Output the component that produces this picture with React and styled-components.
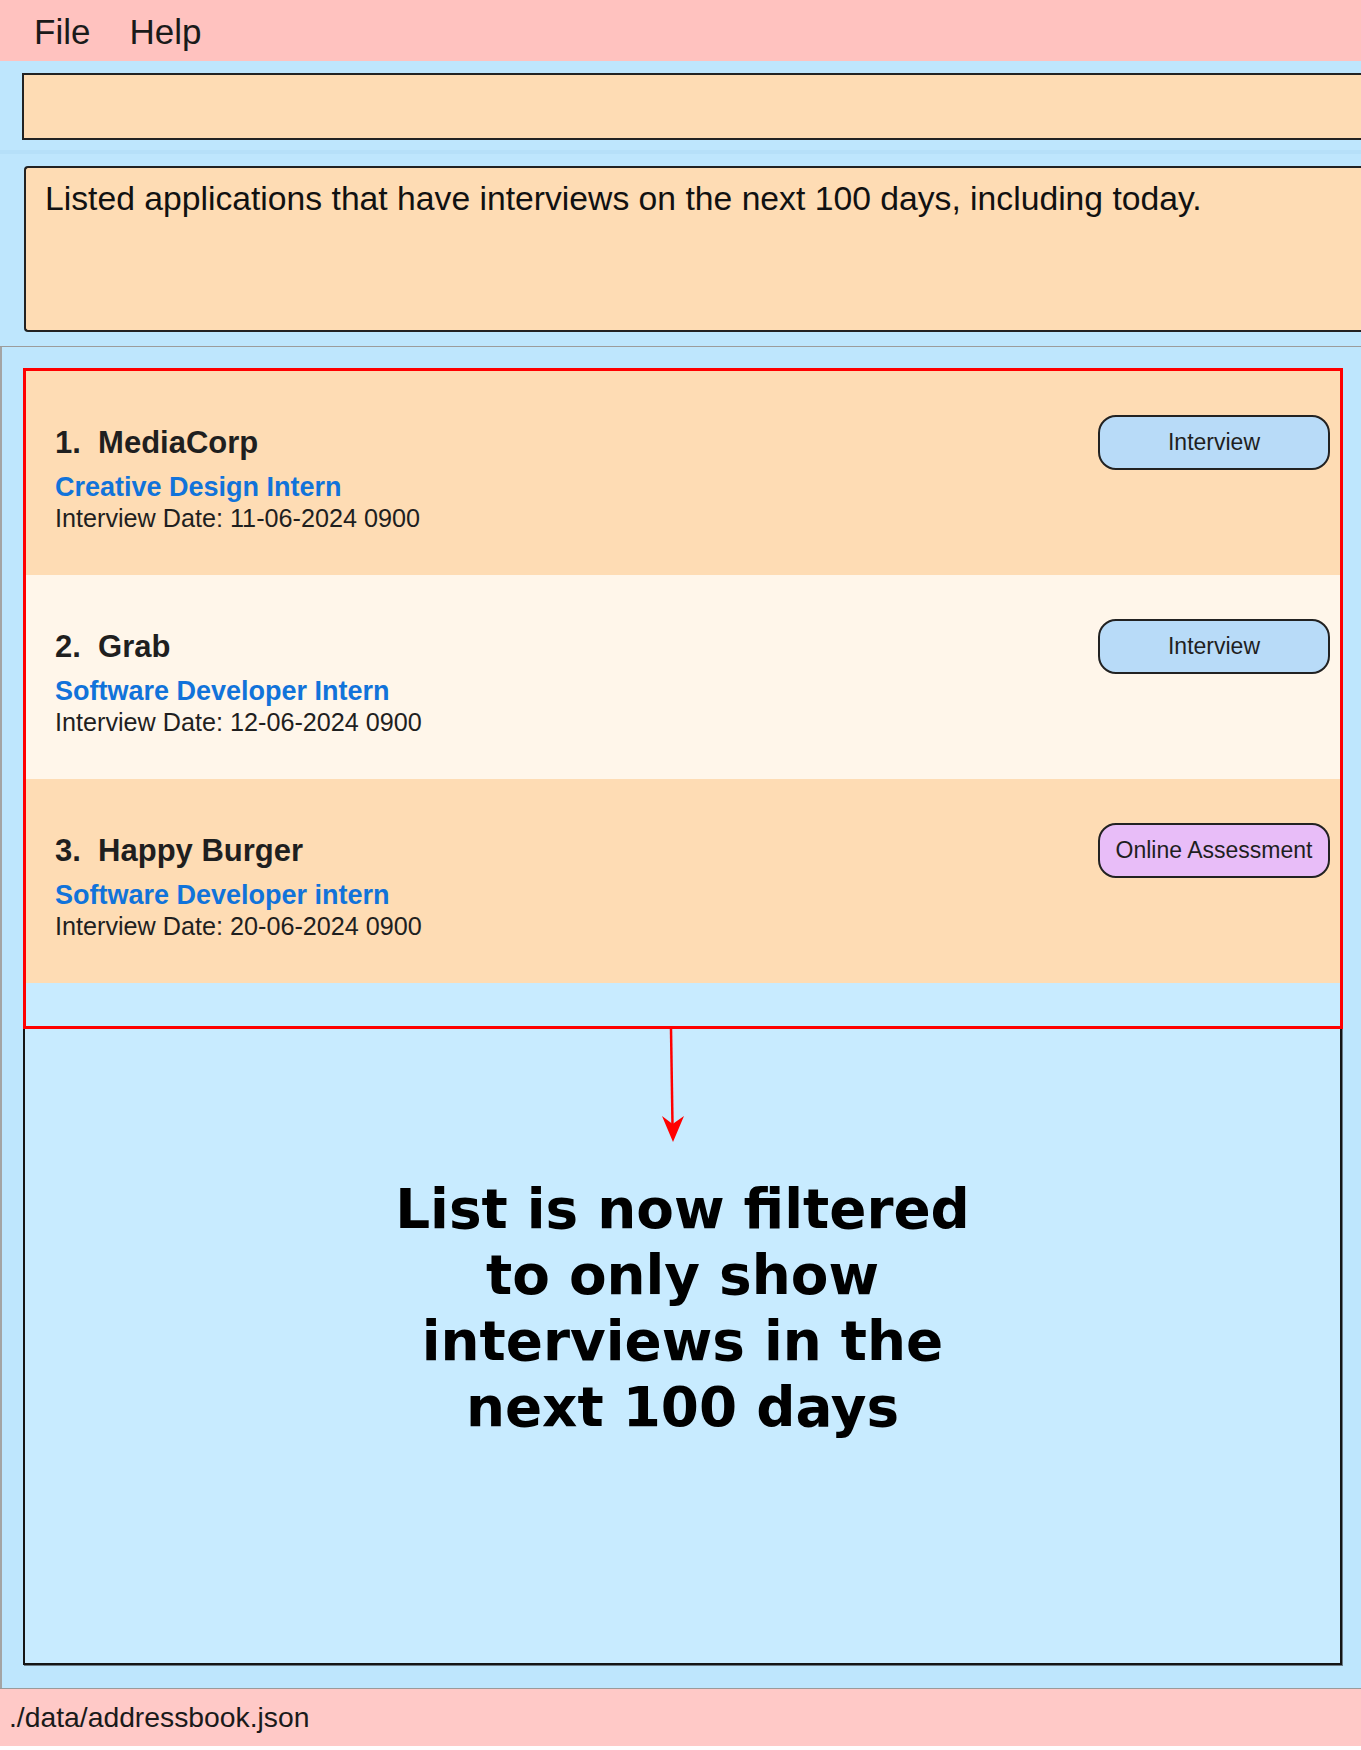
import React from 'react';
import styled, { createGlobalStyle } from 'styled-components';

const GlobalStyle = createGlobalStyle`
    html, body {
        margin:0;
        padding:0;
        background:#ffffff;
    }
    body {
        font-family:"Liberation Sans", Arial, sans-serif;
        color:#1e1e1e;
    }
`;

const Window = styled.div`
    width:1361px;
    height:1746px;
    display:flex;
    flex-direction:column;
    overflow:hidden;
`;

const MenuBar = styled.div`
    height:61px;
    flex-shrink:0;
    box-sizing:border-box;
    padding:2px 0 0 34px;
    display:flex;
    align-items:center;
    gap:39px;
    background:#ffc2bf;
    font-size:35px;
    color:#1a1a1a;
`;

const TopPane = styled.div`
    flex-shrink:0;
    background:#bee6fd;
    border-bottom:1px solid #9c9c9c;
`;

const CommandArea = styled.div`
    padding:12px 0 10px 22px;
`;

const CommandBox = styled.div`
    height:67px;
    box-sizing:border-box;
    border:2px solid #222;
    border-right:none;
    background:#fedcb4;
`;

const Splitter = styled.div`
    height:4px;
    background:#b6e0f9;
`;

const ResultArea = styled.div`
    padding:12px 0 14px 24px;
`;

const ResultBox = styled.div`
    height:166px;
    box-sizing:border-box;
    border:2px solid #222;
    border-right:none;
    border-radius:4px 0 0 4px;
    background:#fedcb4;
    padding:11px 0 0 19px;
    font-size:33.7px;
    line-height:38px;
    color:#111;
`;

const ListPane = styled.div`
    flex:1;
    display:flex;
    padding:21px 19px 23px 21px;
    border-left:2px solid #a4a4a4;
    background:#bee6fd;
`;

const ListBox = styled.div`
    position:relative;
    flex:1;
    border:2px solid #151515;
    padding-top:1px;
    background:#c8ebff;
    box-shadow:1px 1px 0 #6a7a85;
`;

const Card = styled.div`
    height:204px;
    box-sizing:border-box;
    display:flex;
    justify-content:space-between;
    align-items:flex-start;
    padding:0 10px 0 30px;
    background:${p => (p.$alt ? '#fff6ea' : '#fedcb4')};
`;

const Info = styled.div`
    padding-top:54px;
    display:flex;
    flex-direction:column;
`;

const Title = styled.div`
    font-size:31px;
    line-height:36px;
    font-weight:bold;
    white-space:pre;
    color:#1f1f1f;
`;

const Role = styled.div`
    margin-top:11px;
    font-size:27px;
    line-height:31px;
    font-weight:bold;
    color:#1173da;
`;

const DateLine = styled.div`
    font-size:25.2px;
    line-height:30px;
    color:#1f1f1f;
`;

const Badge = styled.div`
    margin-top:44px;
    width:232px;
    height:55px;
    box-sizing:border-box;
    border:2px solid #222;
    border-radius:18px;
    display:flex;
    align-items:center;
    justify-content:center;
    font-size:23px;
    color:#1f1f1f;
    background:${p => p.$bg};
`;

const Highlight = styled.div`
    position:absolute;
    left:-2px;
    top:-2px;
    width:1320px;
    height:661px;
    box-sizing:border-box;
    border:3px solid #ff0000;
    pointer-events:none;
`;

const Arrow = styled.svg`
    position:absolute;
    left:634px;
    top:659px;
`;

const Caption = styled.div`
    position:absolute;
    left:0;
    right:0;
    top:806px;
    text-align:center;
    white-space:nowrap;
    font-family:"DejaVu Sans", Verdana, sans-serif;
    font-weight:bold;
    font-size:54.8px;
    line-height:66px;
    color:#000;
`;

const StatusBar = styled.div`
    height:58px;
    flex-shrink:0;
    box-sizing:border-box;
    display:flex;
    align-items:center;
    padding-left:9px;
    border-top:1px solid #9a9a9a;
    background:#ffc9c7;
    font-size:28.3px;
    color:#1a1a1a;
`;

const applications = [
    { company: 'MediaCorp', role: 'Creative Design Intern', date: '11-06-2024 0900', status: 'Interview' },
    { company: 'Grab', role: 'Software Developer Intern', date: '12-06-2024 0900', status: 'Interview' },
    { company: 'Happy Burger', role: 'Software Developer intern', date: '20-06-2024 0900', status: 'Online Assessment' },
];

const statusColors = {
    'Interview': '#b8dbf8',
    'Online Assessment': '#e8bdf8',
};

function App() {
    return (
        <>
            <GlobalStyle />
            <Window>
                <MenuBar>
                    <span>File</span>
                    <span>Help</span>
                </MenuBar>
                <TopPane>
                    <CommandArea>
                        <CommandBox />
                    </CommandArea>
                    <Splitter />
                    <ResultArea>
                        <ResultBox>Listed applications that have interviews on the next 100 days, including today.</ResultBox>
                    </ResultArea>
                </TopPane>
                <ListPane>
                    <ListBox>
                        {applications.map((app, i) => (
                            <Card key={app.company} $alt={i % 2 === 1}>
                                <Info>
                                    <Title>{`${i + 1}.  ${app.company}`}</Title>
                                    <Role>{app.role}</Role>
                                    <DateLine>Interview Date: {app.date}</DateLine>
                                </Info>
                                <Badge $bg={statusColors[app.status]}>{app.status}</Badge>
                            </Card>
                        ))}
                        <Highlight />
                        <Arrow width="28" height="114" viewBox="0 0 28 114">
                            <line x1="12" y1="0" x2="13.5" y2="96" stroke="#ff0000" strokeWidth="2.5" />
                            <path d="M14 113 L3 87 L13.6 95 L25 87 Z" fill="#ff0000" />
                        </Arrow>
                        <Caption>
                            List is now filtered<br />
                            to only show<br />
                            interviews in the<br />
                            next 100 days
                        </Caption>
                    </ListBox>
                </ListPane>
                <StatusBar>./data/addressbook.json</StatusBar>
            </Window>
        </>
    );
}

export default App;
